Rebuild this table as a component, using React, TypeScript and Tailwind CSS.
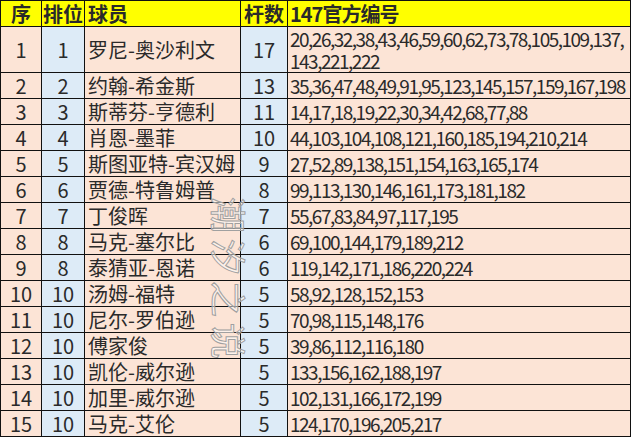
import React from 'react';

const rows: [string, string, string, string, string][] = [
  ['1', '1', '罗尼-奥沙利文', '17', '20,26,32,38,43,46,59,60,62,73,78,105,109,137,\n143,221,222'],
  ['2', '2', '约翰-希金斯', '13', '35,36,47,48,49,91,95,123,145,157,159,167,198'],
  ['3', '3', '斯蒂芬-亨德利', '11', '14,17,18,19,22,30,34,42,68,77,88'],
  ['4', '4', '肖恩-墨菲', '10', '44,103,104,108,121,160,185,194,210,214'],
  ['5', '5', '斯图亚特-宾汉姆', '9', '27,52,89,138,151,154,163,165,174'],
  ['6', '6', '贾德-特鲁姆普', '8', '99,113,130,146,161,173,181,182'],
  ['7', '7', '丁俊晖', '7', '55,67,83,84,97,117,195'],
  ['8', '8', '马克-塞尔比', '6', '69,100,144,179,189,212'],
  ['9', '8', '泰猜亚-恩诺', '6', '119,142,171,186,220,224'],
  ['10', '10', '汤姆-福特', '5', '58,92,128,152,153'],
  ['11', '10', '尼尔-罗伯逊', '5', '70,98,115,148,176'],
  ['12', '10', '傅家俊', '5', '39,86,112,116,180'],
  ['13', '10', '凯伦-威尔逊', '5', '133,156,162,188,197'],
  ['14', '10', '加里-威尔逊', '5', '102,131,166,172,199'],
  ['15', '10', '马克-艾伦', '5', '124,170,196,205,217'],
];

const font = { fontFamily: '"Noto Sans CJK SC", "Noto Sans", sans-serif' };

export default function App() {
  return (
    <div className="relative w-[631px] h-[437px] overflow-hidden bg-[#fce4d6]" style={font}>
      <table className="border-collapse table-fixed w-[631px] text-[20px] text-[#2a2a2a]">
        <colgroup>
          <col className="w-[41px]" />
          <col className="w-[43px]" />
          <col className="w-[156px]" />
          <col className="w-[47px]" />
          <col />
        </colgroup>
        <thead>
          <tr className="h-[26px] bg-[#ffff00] font-bold">
            <th className="border border-[#111] p-0 text-center leading-[24px]">序</th>
            <th className="border border-[#111] p-0 text-center leading-[24px]">排位</th>
            <th className="border border-[#111] p-0 pl-[3px] text-left leading-[24px]">球员</th>
            <th className="border border-[#111] p-0 text-center leading-[24px]">杆数</th>
            <th className="border border-[#111] p-0 pl-[2px] text-left leading-[24px] tracking-[-1px]">147官方编号</th>
          </tr>
        </thead>
        <tbody>
          {rows.map((r, i) => (
            <tr key={i} className={i === 0 ? 'h-[46px]' : 'h-[26px]'}>
              <td className="border border-[#111] p-0 text-center bg-[#fce4d6] leading-[24px]">{r[0]}</td>
              <td className="border border-[#111] p-0 text-center bg-[#ddebf7] leading-[24px]">{r[1]}</td>
              <td className="border border-[#111] p-0 pl-[3px] text-left bg-[#fce4d6] leading-[24px] whitespace-nowrap">{r[2]}</td>
              <td className="border border-[#111] p-0 text-center bg-[#ddebf7] leading-[24px]">{r[3]}</td>
              <td className="border border-[#111] p-0 pl-[2px] text-left bg-[#fce4d6] text-[19px] leading-[22px] whitespace-pre tracking-[-1.5px] align-middle">{r[4]}</td>
            </tr>
          ))}
        </tbody>
      </table>
      {/* watermark */}
      <div
        className="absolute left-[212px] top-[194px] w-[36px] flex flex-col items-center text-[36px] leading-[42px] text-white/50 pointer-events-none"
        style={{ WebkitTextStroke: '1px #a0a0a0' }}
      >
        <span className="rotate-90">潮</span>
        <span className="rotate-90">汐</span>
        <span className="rotate-90">之</span>
        <span className="rotate-90">说</span>
      </div>
    </div>
  );
}
